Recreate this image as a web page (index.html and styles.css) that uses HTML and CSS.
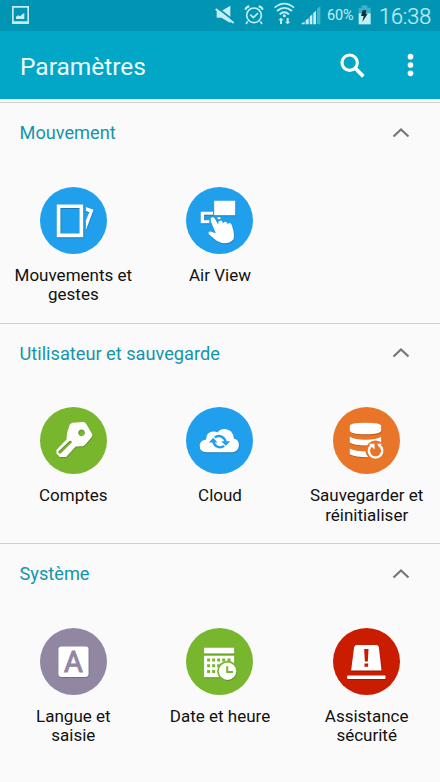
FILE: index.html
```html
<!DOCTYPE html>
<html lang="fr">
<head>
<meta charset="utf-8">
<title>Paramètres</title>
<link rel="stylesheet" href="styles.css">
</head>
<body>
<div class="status">
  <svg class="picture" width="17" height="18" viewBox="36 18 51 54"><path fill-rule="evenodd" d="M36 18h51v54H36zM41 23v41h41V23zM48 57v-7l6-4 6 3 13-11v19z"/></svg>
  <div class="tray">
    <svg width="20" height="20" viewBox="43 14 60 60"><path d="M48 32h14l27-16v52L62 52H48z"/><path class="cut" d="M47 20l54 42"/><path class="line" d="M45 26l54 42" stroke-width="6"/></svg>
    <svg class="alarm" width="20" height="20" viewBox="131 14 60 60"><g class="line" stroke-width="5"><circle cx="161" cy="45" r="22"/><path d="M150 43l9 9 14-14M142 63l-5 8M180 63l5 8"/><path stroke-width="6" d="M135 28q2-8 12-10M187 28q-2-8-12-10"/></g></svg>
    <svg class="wifi" width="21" height="23" viewBox="221 7 63 69"><g class="line" stroke-width="5.500"><path d="M223 24q29-24 58 0M230 34q22-19 45 0M238 44q14-13 28 0"/></g><circle cx="252" cy="48" r="4.500"/><path d="M242 54l8 8h-5v11h-6V62h-5zM262 74l-8-8h5V55h6v11h5z"/></svg>
    <svg class="signal" width="20" height="20" viewBox="301 14 60 60"><path d="M303 72v-3l9-5v8zM315 72V60l9-6v18zM327 72V49l8-7v30zM338 72V38l8-7v41z"/><path opacity=".35" d="M349 72V25l10-7v54z"/></svg>
    <span class="percent">60%</span>
    <svg class="battery" width="13" height="20" viewBox="472 14 39 60"><path opacity=".3" d="M483 15h17v7h10v20h-36V22h9z"/><path d="M474 39h36v33h-36z"/><path class="bolt" d="M486 30h11l-2 10h6l-16 25 4-18h-8z"/></svg>
    <span class="clock">16:38</span>
  </div>
</div>
<header>
  <h1>Paramètres</h1>
  <svg class="search" width="25" height="25" viewBox="419 157 75 75"><circle cx="448" cy="186" r="23" fill="none" stroke="#fff" stroke-width="9.500"/><path d="M463 201l26 26" stroke="#fff" stroke-width="11"/></svg>
  <svg width="7" height="24" viewBox="621 158 21 72" fill="#fff"><circle cx="631.500" cy="169" r="8.500"/><circle cx="631.500" cy="194" r="8.500"/><circle cx="631.500" cy="219" r="8.500"/></svg>
</header>
<main>
  <section>
    <h2>Mouvement<svg width="18" height="10" viewBox="0 0 18 10"><path d="M1.500 8.500L9 1.500l7.500 7"/></svg></h2>
    <div class="grid">
      <div class="item">
        <svg class="icon blue" viewBox="30 20 200 200"><circle cx="130" cy="120" r="100"/><g class="glyph"><path fill-rule="evenodd" d="M80 72h79v98H80zM91 83v76h57V83z"/><path d="M167 80l23 8-23 61v-29l10-25-10-4z"/></g></svg>
        <span>Mouvements et<br>gestes</span>
      </div>
      <div class="item">
        <svg class="icon blue" viewBox="36 20 200 200"><circle cx="136" cy="120" r="100"/><g class="glyph"><path d="M120 61h63v43h-63zM80 94h37v9H90v16h16v9H80zM129 110h10v6h-8z"/><path d="M110 113q6-6 12 1l10 18 1-8q7-8 12 0l1 5q5-10 13-2l1 4q8-8 13 3 9 25 5 42-12 15-35 11-15-3-25-14l-14-12q-3-8 5-8l16 5-15-35z"/></g></svg>
        <span>Air View</span>
      </div>
    </div>
  </section>
  <section>
    <h2>Utilisateur et sauvegarde<svg width="18" height="10" viewBox="0 0 18 10"><path d="M1.500 8.500L9 1.500l7.500 7"/></svg></h2>
    <div class="grid">
      <div class="item">
        <svg class="icon green" viewBox="30 21 200 200"><circle cx="130" cy="121" r="100"/><g class="glyph"><path fill-rule="evenodd" d="M126 68l33-2q6 0 9 5l18 31q2 5-2 9l-19 23q-3 4-9 4l-19 1-29 31H89l-10-10v-11l30-31 2-21 8-24zM154 88a10 10 0 1 0 .1 0zM117 123l-32 31q-1 9 8 5l32-32q-1-7-8-4z"/></g></svg>
        <span>Comptes</span>
      </div>
      <div class="item">
        <svg class="icon blue" viewBox="36 21 200 200"><circle cx="136" cy="121" r="100"/><g class="glyph"><path d="M96 156q-19-2-19-18 0-18 19-20 0-22 20-24 8-1 14 3 8-11 23-10 24 3 26 28 16 5 15 21-1 18-19 20z"/></g><g fill="none" stroke="#209fec" stroke-width="7"><path d="M122 112a20 20 0 0 1 32 13M150 137a20 20 0 0 1-32-13"/></g><path class="ink" d="M104 127l13-14 13 14zM141 123h27l-13 14z"/></svg>
        <span>Cloud</span>
      </div>
      <div class="item">
        <svg class="icon orange" viewBox="35 21 200 200"><circle cx="135" cy="121" r="100"/><g class="glyph"><path d="M85 78q0-10 47-10t47 10v13q0 11-47 11T85 91zM85 110q15 9 47 9t47-9v17q-13 9-47 9t-47-9zM85 145q15 9 55 9v17q-40 0-55-9z"/></g><circle cx="162" cy="151" r="30"/><path d="M151 135a20 20 0 1 0 22 0" fill="none" stroke="#fff" stroke-width="7"/><path fill="#fff" d="M142 131h17v17zM167 131h14l-10 8z"/></svg>
        <span>Sauvegarder et<br>réinitialiser</span>
      </div>
    </div>
  </section>
  <section>
    <h2>Système<svg width="18" height="10" viewBox="0 0 18 10"><path d="M1.500 8.500L9 1.500l7.500 7"/></svg></h2>
    <div class="grid">
      <div class="item">
        <svg class="icon purple" viewBox="30 24 200 200"><circle cx="130" cy="124" r="100"/><rect class="glyph" x="85" y="79" width="90" height="91" rx="9"/><text class="letter" x="130" y="156" text-anchor="middle">A</text></svg>
        <span>Langue et<br>saisie</span>
      </div>
      <div class="item">
        <svg class="icon green" viewBox="36 24 200 200"><circle cx="136" cy="124" r="100"/><g class="glyph"><path d="M90 83h90v17H90zM90 107h90v64H90z"/></g><path class="ink" d="M99 115h9v9h-9zM114 115h9v9h-9zM129 115h9v9h-9zM144 115h9v9h-9zM160 115h9v9h-9zM99 132h9v9h-9zM114 132h9v9h-9zM129 132h9v9h-9zM99 149h9v9h-9zM114 149h9v9h-9z"/><circle cx="160" cy="153" r="31"/><circle class="glyph" cx="160" cy="153" r="26"/><path d="M159 138v17h17" fill="none" stroke="#78b72d" stroke-width="6"/></svg>
        <span>Date et heure</span>
      </div>
      <div class="item">
        <svg class="icon red" viewBox="35 24 200 200"><circle cx="135" cy="124" r="100"/><g class="glyph"><path d="M107 75h57q7 0 8 7l8 69H89l9-69q1-7 9-7z"/><rect x="77" y="166" width="115" height="10" rx="3"/></g><path class="ink" d="M128 87h13l-2 37h-9zM129 130h11v10h-11z"/></svg>
        <span>Assistance<br>sécurité</span>
      </div>
    </div>
  </section>
</main>
</body>
</html>
```
FILE: styles.css
```css
* { box-sizing: border-box; }
body {
  margin: 0;
  width: 440px;
  height: 782px;
  overflow: hidden;
  background: #fafafa;
  color: #111;
  font-family: Roboto, sans-serif;
}
svg { display: block; flex: none; }
.status {
  height: 31px;
  background: #0295b3;
  display: flex;
  justify-content: space-between;
  padding: 0 8px 0 12px;
  color: #c5edf5;
  fill: #c5edf5;
}
.picture { margin-top: 6px; }
.tray { display: flex; align-items: flex-start; padding-top: 5px; }
.line { fill: none; stroke: #c5edf5; }
.cut { stroke: #0295b3; stroke-width: 5; }
.alarm { margin-left: 9px; }
.wifi { margin: -3px 0 0 10px; }
.signal { margin-left: 6px; }
.percent { font-size: 14.500px; line-height: 22px; width: 27px; margin-left: 6px; margin-right: 1px; white-space: nowrap; letter-spacing: -.2px; }
.battery { margin-left: 3px; }
.bolt { fill: #10303b; }
.clock { font-size: 21.500px; line-height: 23px; width: 53px; margin-left: 8px; white-space: nowrap; font-weight: 300; -webkit-text-stroke: .2px; }
header {
  height: 68px;
  background: #02a6c7;
  display: flex;
  align-items: center;
  padding: 0 26px 0 20px;
}
h1 {
  margin: 3px 0 0;
  flex: 1;
  font-size: 24.500px;
  font-weight: 400;
  line-height: 32px;
  color: #effbfd;
}
.search { margin-right: 42px; }
main { padding-top: 3px; }
section { height: 220.700px; border-top: 1px solid #cfcfcf; }
h2 {
  margin: 0;
  height: 59px;
  padding: 0 30px 0 19.500px;
  display: flex;
  align-items: center;
  justify-content: space-between;
  color: #1494ac;
  font-size: 18.200px;
  font-weight: 400;
}
h2 svg { fill: none; stroke: #777; stroke-width: 2.200; }
.grid { display: grid; grid-template-columns: repeat(3, 1fr); padding-top: 24.500px; }
.item {
  display: flex;
  flex-direction: column;
  align-items: center;
  text-align: center;
  font-size: 17px;
  line-height: 19.500px;
  white-space: nowrap;
}
.item span { margin-top: 12px; }
.icon { width: 67px; height: 67px; }
.glyph { fill: #fff; filter: drop-shadow(1px 2px 1px rgba(0, 0, 0, .3)); }
.letter { font: 400 86px Roboto, sans-serif; stroke: #9187a3; stroke-width: 3; }
.blue { fill: #209fec; }
.green { fill: #78b72d; }
.orange { fill: #e97528; }
.purple { fill: #9187a3; }
.red { fill: #c91c00; }
```
